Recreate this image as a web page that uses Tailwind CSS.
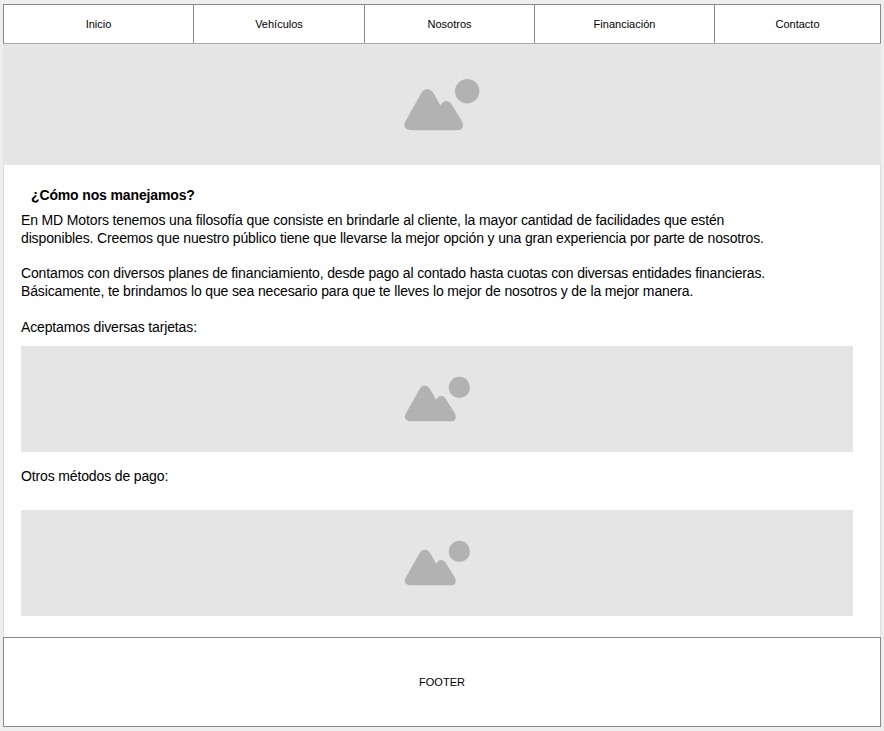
<!DOCTYPE html>
<html lang="es">
<head>
<meta charset="utf-8">
<title>MD Motors</title>
<script src="https://cdn.jsdelivr.net/npm/@tailwindcss/browser@4"></script>
</head>
<body class="bg-[#eeeeee] pt-1 pl-[3px] font-['Liberation_Sans',Arial,sans-serif] text-black">
<svg class="hidden">
  <symbol id="picture" viewBox="0 0 76 53">
    <path fill="#b2b2b2" d="M16.800 16C18.500 13 20.300 11.200 23.300 11.200C26.300 11.200 28.300 13 30 16L36.500 27.500C38.200 24.500 39.700 23 42.200 23C44.800 23 46.300 24.300 47.800 26.700L57.800 43C59.200 45.500 59.500 48 58.300 50C57.300 51.600 56 52.200 53.500 52.200H8C4.500 52.200 2.500 51.500 1.200 49.500C0 47.600 .3 45.300 1.500 43.200Z"/>
    <circle cx="63.200" cy="13.200" r="12.200" fill="#b2b2b2"/>
  </symbol>
</svg>
<div class="flex h-[723px] w-[878px] flex-col bg-white">
  <nav class="grid h-10 shrink-0 grid-cols-[191px_171px_170px_180px_166px] border-t border-b border-t-[#888888] border-b-[#aaaaaa] bg-white text-center text-[11px] leading-[38px]">
    <a class="border-x border-[#888888]">Inicio</a>
    <a class="border-r border-[#888888]">Vehículos</a>
    <a class="border-r border-[#888888]">Nosotros</a>
    <a class="border-r border-[#888888]">Financiación</a>
    <a class="border-r border-[#888888]">Contacto</a>
  </nav>
  <div class="h-[121px] shrink-0 bg-[#e5e5e5] pt-[34px] pl-[401px]">
    <svg class="h-[53px] w-[76px]"><use href="#picture"/></svg>
  </div>
  <main class="h-[472px] shrink-0 border-x border-[#dddddd] pr-[26px] pl-[17px] text-[14px] leading-[17.8px] tracking-[-0.138px]">
    <h1 class="pt-[22px] pl-[10px] font-bold">¿Cómo nos manejamos?</h1>
    <p class="mt-[7px] whitespace-nowrap">En MD Motors tenemos una filosofía que consiste en brindarle al cliente, la mayor cantidad de facilidades que estén<br>disponibles. Creemos que nuestro público tiene que llevarse la mejor opción y una gran experiencia por parte de nosotros.<br><br>Contamos con diversos planes de financiamiento, desde pago al contado hasta cuotas con diversas entidades financieras.<br>Básicamente, te brindamos lo que sea necesario para que te lleves lo mejor de nosotros y de la mejor manera.<br><br>Aceptamos diversas tarjetas:</p>
    <div class="mt-[9.600px] h-[106px] w-[832px] bg-[#e5e5e5] pt-[30px] pl-[383px]">
      <svg class="h-[46px] w-[67px]"><use href="#picture"/></svg>
    </div>
    <p class="pt-4">Otros métodos de pago:</p>
    <div class="mt-[24.200px] h-[106px] w-[832px] bg-[#e5e5e5] pt-[30px] pl-[383px]">
      <svg class="h-[46px] w-[67px]"><use href="#picture"/></svg>
    </div>
  </main>
  <footer class="flex h-[90px] shrink-0 items-center justify-center border border-[#888888] text-[11px]">FOOTER</footer>
</div>
</body>
</html>
